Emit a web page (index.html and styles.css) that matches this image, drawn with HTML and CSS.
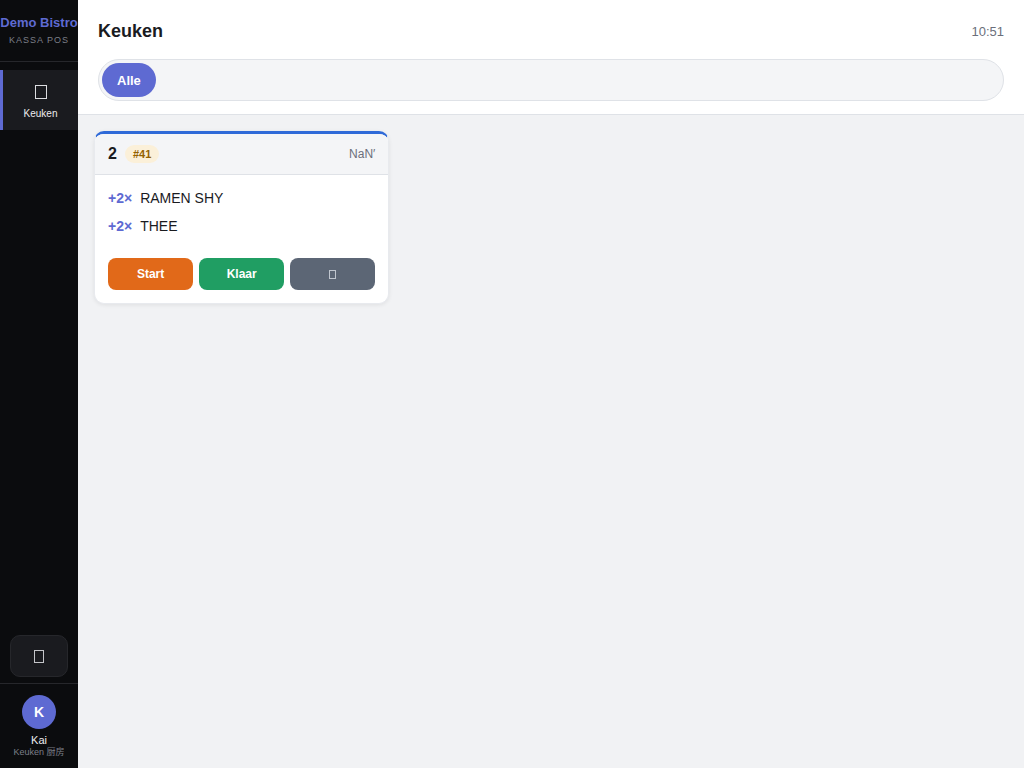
FILE: index.html
```html
<!DOCTYPE html>
<html lang="nl">
<head>
    <meta charset="UTF-8">
    <meta name="viewport" content="width=device-width, initial-scale=1.0">
    <title>Keuken - Demo Bistro</title>
    <link rel="stylesheet" href="styles.css">
</head>
<body>

<aside class="sidebar">
    <div class="brand">
        <div class="brand-name">Demo Bistro</div>
        <div class="brand-sub">KASSA POS</div>
    </div>

    <nav class="nav">
        <a href="#keuken" class="nav-item active">
            <svg class="nav-icon" width="12" height="14" viewBox="0 0 12 14" aria-hidden="true"><rect x="0.5" y="0.5" width="11" height="13"/></svg>
            <span>Keuken</span>
        </a>
    </nav>

    <button type="button" class="theme-btn" aria-label="Thema">
        <svg width="10" height="13" viewBox="0 0 10 13" aria-hidden="true"><rect x="0.5" y="0.5" width="9" height="12"/></svg>
    </button>

    <div class="user">
        <div class="avatar">K</div>
        <div class="user-name">Kai</div>
        <div class="user-role">Keuken 厨房</div>
    </div>
</aside>

<main class="main">
    <header class="header">
        <div class="header-row">
            <h1>Keuken</h1>
            <time class="clock">10:51</time>
        </div>
        <div class="filters">
            <button type="button" class="filter-btn active">Alle</button>
        </div>
    </header>

    <section class="tickets">
        <article class="ticket">
            <div class="ticket-head">
                <span class="table-no">2</span>
                <span class="order-no">#41</span>
                <span class="elapsed">NaN′</span>
            </div>
            <ul class="items">
                <li><span class="qty">+2×</span><span>RAMEN SHY</span></li>
                <li><span class="qty">+2×</span><span>THEE</span></li>
            </ul>
            <div class="actions">
                <button type="button" class="btn btn-start">Start</button>
                <button type="button" class="btn btn-done">Klaar</button>
                <button type="button" class="btn btn-print" aria-label="Print">
                    <svg width="7" height="9" viewBox="0 0 7 9" aria-hidden="true"><rect x="0.5" y="0.5" width="6" height="8"/></svg>
                </button>
            </div>
        </article>
    </section>
</main>

</body>
</html>
```

FILE: styles.css
```css
* {
    box-sizing: border-box;
    margin: 0;
    padding: 0;
}

body {
    display: flex;
    min-height: 100vh;
    font-family: "Liberation Sans", "Noto Sans CJK SC", sans-serif;
    background: #f1f2f4;
    color: #1a1b1f;
}

button {
    display: flex;
    align-items: center;
    justify-content: center;
    font-family: inherit;
    border: none;
    cursor: pointer;
}

svg {
    display: block;
    fill: none;
    stroke: currentColor;
}

/* Sidebar */
.sidebar {
    display: flex;
    flex-direction: column;
    flex-shrink: 0;
    width: 78px;
    background: #0b0c0e;
    color: #ececee;
}

.brand {
    padding: 15px 0 16px;
    border-bottom: 1px solid #26272b;
    text-align: center;
    white-space: nowrap;
}

.brand-name {
    font-size: 13px;
    font-weight: bold;
    line-height: 15px;
    color: #5e6ad2;
}

.brand-sub {
    margin-top: 5px;
    font-size: 9px;
    line-height: 10px;
    letter-spacing: 1px;
    color: #7c7f88;
}

.nav {
    flex: 1;
    padding-top: 8px;
}

.nav-item {
    display: flex;
    flex-direction: column;
    align-items: center;
    gap: 9px;
    height: 60px;
    padding-top: 15px;
    border-left: 3px solid transparent;
    font-size: 10px;
    line-height: 12px;
    color: #ececee;
    text-decoration: none;
}

.nav-item.active {
    background: #1a1b1f;
    border-left-color: #5e6ad2;
}

.nav-icon {
    color: #dcdde0;
}

.theme-btn {
    height: 42px;
    margin: 0 10px 6px;
    border: 1px solid #26272b;
    border-radius: 10px;
    background: #1a1b1f;
    color: #c4c5c9;
}

.user {
    display: flex;
    flex-direction: column;
    align-items: center;
    padding: 11px 0 10px;
    border-top: 1px solid #26272b;
}

.avatar {
    width: 34px;
    height: 34px;
    margin-bottom: 5px;
    border-radius: 50%;
    background: #5e6ad2;
    color: #fff;
    font-size: 14px;
    font-weight: bold;
    line-height: 34px;
    text-align: center;
}

.user-name {
    font-size: 11px;
    line-height: 12px;
}

.user-role {
    font-size: 9px;
    line-height: 12px;
    color: #7c7f88;
}

/* Header */
.main {
    flex: 1;
    min-width: 0;
}

.header {
    padding: 20px 20px 13px;
    background: #fff;
    border-bottom: 1px solid #dfe2e7;
}

.header-row {
    display: flex;
    align-items: center;
    justify-content: space-between;
    margin-bottom: 17px;
}

h1 {
    font-size: 18px;
    line-height: 22px;
}

.clock {
    font-size: 13px;
    color: #6b6f7b;
}

.filters {
    display: flex;
    padding: 3px;
    border: 1px solid #dfe2e7;
    border-radius: 21px;
    background: #f4f5f7;
}

.filter-btn {
    height: 34px;
    padding: 0 15px;
    border-radius: 17px;
    background: transparent;
    font-size: 13px;
    font-weight: bold;
}

.filter-btn.active {
    background: #5e6ad2;
    color: #fff;
}

/* Tickets */
.tickets {
    display: grid;
    grid-template-columns: repeat(auto-fill, minmax(280px, 1fr));
    gap: 14px;
    padding: 16px;
}

.ticket {
    overflow: hidden;
    border: 1px solid #e8eaee;
    border-top: 3px solid #2f6ad8;
    border-radius: 10px;
    background: #fff;
    box-shadow: 0 1px 4px rgba(0, 0, 0, 0.08);
}

.ticket-head {
    display: flex;
    align-items: center;
    gap: 8px;
    height: 41px;
    padding: 0 13px;
    border-bottom: 1px solid #dfe2e7;
    background: #f4f5f7;
}

.table-no {
    font-size: 16px;
    font-weight: bold;
}

.order-no {
    padding: 0 8px;
    border-radius: 9px;
    background: #fbf0d9;
    color: #946200;
    font-size: 11px;
    font-weight: bold;
    line-height: 18px;
}

.elapsed {
    margin-left: auto;
    font-size: 12px;
    color: #6b6f7b;
}

.items {
    padding: 9px 13px;
    list-style: none;
}

.items li {
    display: flex;
    gap: 8px;
    font-size: 14px;
    line-height: 28px;
}

.qty {
    font-weight: bold;
    color: #5e6ad2;
}

.actions {
    display: grid;
    grid-template-columns: repeat(3, 1fr);
    gap: 6px;
    padding: 9px 13px 13px;
}

.btn {
    height: 32px;
    border-radius: 8px;
    color: #fff;
    font-size: 12px;
    font-weight: bold;
}

.btn-start {
    background: #e16919;
}

.btn-done {
    background: #209e63;
}

.btn-print {
    background: #5c6675;
    color: #c0c6cf;
}
```
